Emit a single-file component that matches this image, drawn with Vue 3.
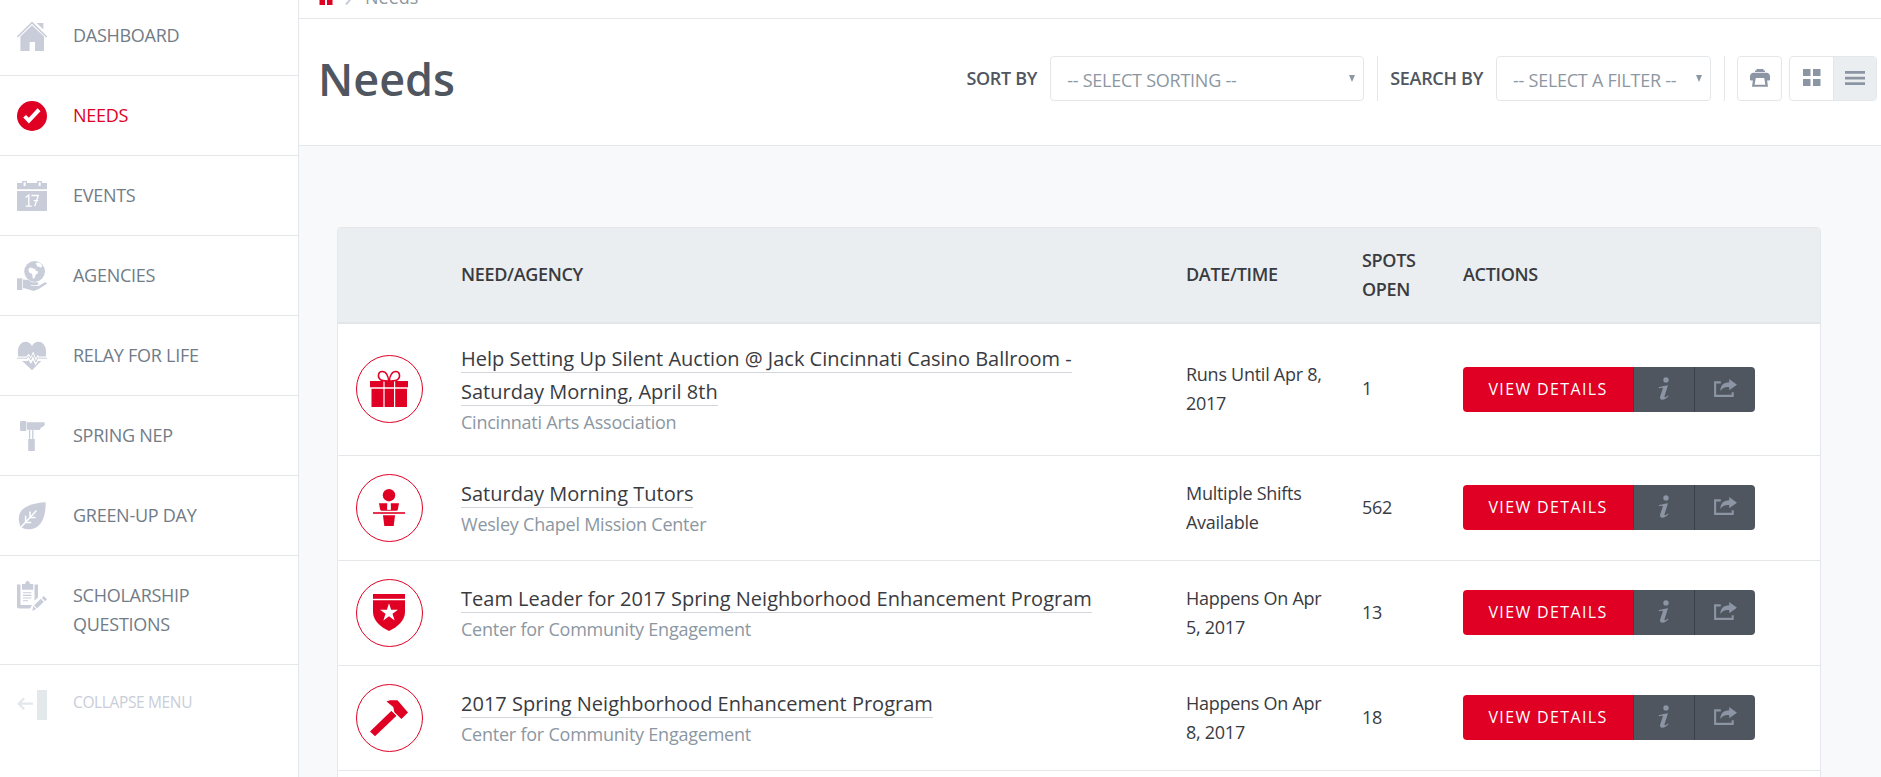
<script setup>
const menu = [
  { label: 'DASHBOARD', icon: 'home' },
  { label: 'NEEDS', icon: 'check', active: true },
  { label: 'EVENTS', icon: 'calendar' },
  { label: 'AGENCIES', icon: 'globe' },
  { label: 'RELAY FOR LIFE', icon: 'heart' },
  { label: 'SPRING NEP', icon: 'mallet' },
  { label: 'GREEN-UP DAY', icon: 'leaf' },
  { label: 'SCHOLARSHIP\nQUESTIONS', icon: 'clipboard' },
]

const needs = [
  {
    icon: 'gift',
    title: 'Help Setting Up Silent Auction @ Jack Cincinnati Casino Ballroom -\nSaturday Morning, April 8th',
    agency: 'Cincinnati Arts Association',
    date: 'Runs Until Apr 8,\n2017',
    spots: '1',
  },
  {
    icon: 'tutor',
    title: 'Saturday Morning Tutors',
    agency: 'Wesley Chapel Mission Center',
    date: 'Multiple Shifts\nAvailable',
    spots: '562',
  },
  {
    icon: 'badge',
    title: 'Team Leader for 2017 Spring Neighborhood Enhancement Program',
    agency: 'Center for Community Engagement',
    date: 'Happens On Apr\n5, 2017',
    spots: '13',
  },
  {
    icon: 'hammer',
    title: '2017 Spring Neighborhood Enhancement Program',
    agency: 'Center for Community Engagement',
    date: 'Happens On Apr\n8, 2017',
    spots: '18',
  },
]
</script>

<template>
  <div class="app">
    <nav class="sidebar">
      <a v-for="m in menu" :key="m.label" class="item" :class="{ active: m.active }">
        <svg class="item-icon" viewBox="0 0 30 30">
          <g v-if="m.icon === 'home'">
            <path d="M15 4.2 27 15.6V30H18V21H12.6V30H3.4V15.6Z" />
            <path d="M.4 16 15 1.6 29.6 16" fill="none" stroke="currentColor" stroke-width="1.5" />
            <path d="M20 2h6.4v6.6L20 2.6Z" />
          </g>
          <g v-else-if="m.icon === 'check'">
            <circle cx="15" cy="15" r="15" />
            <path d="M6.2 16.6 9 13.9l2.8 2.8L20.6 7.3l2.9 2.9L11.9 22.4Z" fill="#fff" />
          </g>
          <g v-else-if="m.icon === 'calendar'">
            <path d="M0 2h5V0h5v2h10V0h5v2h5v6.2H0ZM6.6 1.200V5h2V1.200ZM21.600 1.200V5h2V1.200Z" fill-rule="evenodd" />
            <path d="M0 10h30v20H0Z" />
            <g fill="none" stroke="#fff" stroke-width="1.3">
              <path d="M8.600 16.400 11.800 14v11M8.600 25.100h6.200" />
              <path d="M14.400 14.500h6.900l-3.600 10.800M16.600 19.600h4.600" />
            </g>
          </g>
          <g v-else-if="m.icon === 'globe'">
            <circle cx="17.600" cy="10.500" r="10.400" />
            <path d="M11.300 8.200 13 6.600l2.500.3 1.400 1 1.400-.4.200 2.100 2.700 1.200-.5 1.800-2 1.100-1 3-.8 1-1.300-.8-.4-4-3-1.300Z" fill="#fff" />
            <path d="M18.600 2.200 21.400 1.200l3 2.100.8 2.600-2.200.5-1.200-1-1.500.4-.5-1.600Z" fill="#fff" />
            <path d="M0 17.300h5.300V29H0Z" />
            <path d="M6 18.400 11.400 19l3.600 2.200h5.200c1.800.4 1.600 2.800-.4 3h-6v.8h7.600l2-1 3.600-2.300c1.600-.8 3 .2 3 1L21.600 28l-4.800 2-9.400-2.800L6 27.200Z" />
          </g>
          <g v-else-if="m.icon === 'heart'">
            <path d="M1.300 15.600C-.4 7 3 .8 8.500 .8c3 0 5.300 1.700 6.500 4.400C16.200 2.500 18.500 .8 21.500 .8 27 .8 30.400 7 28.700 15.600h-7l-1-1.800-1.700 4.600-2.700-7.200-2.600 5.600-2-3.800-2.200 2.600Z" />
            <path d="M0 17.200h10l1.700-2 2 3.800 2.400-5.200 2.700 7.200 2-4.600.8.800H30" fill="none" stroke="#fff" stroke-width="2.600" />
            <path d="M0 17.200h10l1.700-2 2 3.800 2.400-5.200 2.700 7.200 2-4.600.8.800H30" fill="none" stroke="currentColor" stroke-width="1" />
            <path d="M5.200 20h5.300l1-1 2.400 4 2.200-4 2.400 5.600 2.600-4.600h3.200L15 29.200Z" />
          </g>
          <g v-else-if="m.icon === 'mallet'">
            <rect x="3" y="0" width="6.400" height="10" rx="1.200" />
            <path d="M10 1.200h17.600V4.600L24 6.800 22.600 9 10 8.800Z" />
            <path d="M12.600 9v9M15.800 9v9" stroke="currentColor" stroke-width="1.300" />
            <path d="M11.200 18h6.600v12h-6.600Z" />
          </g>
          <g v-else-if="m.icon === 'leaf'">
            <path d="M28.600 1.200C29 13 25.600 29.600 9.600 28.200 6.800 27.800 5 27 3.700 26-1.500 14 2.800 2.500 28.600 1.200Z" />
            <path d="M2 28.200 19.500 9.600M13 16.400V10.600M8.600 21.200v-6.400M12.800 16.600h5.800M8.200 21.500h6" fill="none" stroke="#fff" stroke-width="1.500" />
          </g>
          <g v-else>
            <path d="M3.500 3.500V24H15L13 27.500H2Q0 27.500 0 25.500V3.500Z" />
            <path d="M17.500 3.500H21V16.500L17.500 19.500Z" />
            <path d="M5 3h3.200q.4-3 2.400-3t2.400 3h3.200v5.800H5Z" />
            <path d="M6 11.800h8.400M6 14.400h8.400M6 17h8.400M6 19.700h5" stroke="currentColor" stroke-width="1.100" />
            <path d="M17.200 24.200 23.800 17.800 26.800 20.800 20 27.400ZM24.800 17l1.400-1.500q.8-.5 1.600.4l1.800 1.800q.5.800-.2 1.500L27.800 20.100ZM16.400 25l2.800 3-4 2Z" />
          </g>
        </svg>
        <span>{{ m.label }}</span>
      </a>
      <a class="item collapse">
        <svg class="item-icon" viewBox="0 0 30 30">
          <path d="M20 0h10v30H20Z" />
          <path d="M16 13.700H1.800M7.200 8.200 1.700 13.700l5.500 5.500" fill="none" stroke="currentColor" stroke-width="2.200" />
        </svg>
        <span>COLLAPSE MENU</span>
      </a>
    </nav>

    <main class="main">
      <div class="crumbs">
        <svg class="crumb-home" viewBox="0 0 18 15">
          <path d="M9 0 17 7.500V8H15.500V15H10V9H8v6H2.500V8H1V7.500Z" />
        </svg>
        <svg class="crumb-sep" viewBox="0 0 8 14"><path d="m1 .5 5.500 6.500L1 13.500" /></svg>
        <span>Needs</span>
      </div>

      <header class="head">
        <h1>Needs</h1>
        <div class="tools">
          <span class="label">SORT BY</span>
          <div class="select sort"><span>-- SELECT SORTING --</span><i></i></div>
          <span class="divider"></span>
          <span class="label">SEARCH BY</span>
          <div class="select filter"><span>-- SELECT A FILTER --</span><i></i></div>
          <span class="divider"></span>
          <button class="tool">
            <svg width="20" height="18" viewBox="0 0 20 18">
              <path d="M6.500 0h7v1.500H15V3H5V1.500h1.500Z" />
              <path d="M3 3.800h14q3 .8 3 4V10.500q0 1-1 1H17.100L18 17.700H2L2.900 11.500H1q-1 0-1-1V7.800Q0 4.600 3 3.800ZM5.800 9 4.600 15.800H15.400L14.200 9Z" fill-rule="evenodd" />
            </svg>
          </button>
          <div class="views">
            <button class="view">
              <svg class="tiles" width="18" height="17" viewBox="0 0 18 17">
                <path d="M0 0h7.500v7H0ZM10 0h7.500v7H10ZM0 10h7.500v7H0ZM10 10h7.500v7H10Z" />
              </svg>
            </button>
            <button class="view on">
              <svg width="20" height="14" viewBox="0 0 20 14">
                <path d="M0 0h20v2.700H0ZM0 5.700h20v2.700H0ZM0 11.300h20V14H0Z" />
              </svg>
            </button>
          </div>
        </div>
      </header>

      <section class="content">
        <div class="card">
          <div class="row thead">
            <span></span>
            <span>NEED/AGENCY</span>
            <span>DATE/TIME</span>
            <span class="two-line">SPOTS<br />OPEN</span>
            <span>ACTIONS</span>
          </div>
          <div v-for="n in needs" :key="n.title" class="row need">
            <div class="round">
              <svg width="68" height="68" viewBox="0 0 68 68">
                <ellipse cx="33.500" cy="34" rx="33" ry="33.500" fill="none" stroke="currentColor" />
                <g v-if="n.icon === 'gift'">
                  <path d="M14 26h13.400v6.200H14ZM28.600 26H38v6.200h-9.400ZM39.200 26H52v6.200H39.200Z" />
                  <path d="M15.500 33.700h11.900V52H15.500ZM28.600 33.700H38V52h-9.400ZM39.200 33.700H51V52H39.200Z" />
                  <path d="M32.500 26C32.500 21 30 16.600 26.200 16.600c-4.200 0-5 5.400-1.800 8 1.800 1.400 4.600 1.300 8.100 1.400ZM33.500 26c0-5 2.500-9.400 6.300-9.400 4.200 0 5 5.400 1.800 8-1.800 1.400-4.600 1.300-8.100 1.400Z" fill="none" stroke="currentColor" stroke-width="1.500" />
                </g>
                <g v-else-if="n.icon === 'tutor'">
                  <circle cx="33" cy="21.200" r="6.200" />
                  <path d="M23 29.200h8.200v6.500h3.600v-6.500H43l-1.200 6.500q-.4 1-1.500 1H25.700q-1.100 0-1.500-1Z" />
                  <path d="M32 30h2l.8 5.500h-3.600Z" fill="#fff" />
                  <path d="M17 38h32v2H17Z" opacity=".8" />
                  <path d="M27 41.300h12L37.700 52h-9.400Z" />
                </g>
                <g v-else-if="n.icon === 'badge'">
                  <path d="M17 15h32v4.800H17Z" />
                  <path d="M17 21.200h32V33c0 8-7 15-16 19-9-4-16-11-16-19Z" />
                  <path d="m33 24.200 2.100 6.500H42l-5.500 4.100 2.100 6.600L33 37.300l-5.600 4.100 2.100-6.600L24 30.700h6.900Z" fill="#fff" />
                </g>
                <g v-else>
                  <path d="M30.500 17.500 34 16.200h7.500L52 28.500l-6.600 6.400-7-6.600L37.300 23Z" />
                  <path d="M14 47.500 35.500 26.700l5 5L19 52.300Z" />
                  <path d="m34.600 25.800 7.600 7" stroke="#fff" stroke-width=".8" />
                </g>
              </svg>
            </div>
            <div>
              <div class="title"><a>{{ n.title }}</a></div>
              <div class="agency">{{ n.agency }}</div>
            </div>
            <div class="date">{{ n.date }}</div>
            <div class="spots">{{ n.spots }}</div>
            <div class="actions">
              <button class="details">VIEW DETAILS</button>
              <button class="dark">
                <svg width="12" height="23" viewBox="0 0 12 23">
                  <circle cx="8" cy="2.900" r="2.700" />
                  <path d="M.8 10.200C3 9.800 6 9 10 8.300L6.600 19c-.3 1.200 0 1.500.8 1.200.8-.3 1.700-.9 2.700-1.800l.6.600c-2 2.300-4.400 3.700-6.300 3.700-2 0-2.800-1.400-2.200-3.400L4.700 12c.3-1-.2-1.300-1-1.200l-3 .5Z" />
                </svg>
              </button>
              <button class="dark">
                <svg width="23" height="18" viewBox="0 0 23 18">
                  <path d="M6.800 3.400H1.100v13.500h17.600v-3.700" fill="none" stroke="currentColor" stroke-width="2.100" />
                  <path d="M15.200 0 23 5.700l-7.800 5.600V8c-4.200-.3-6.900.8-8.900 4C6.500 6.500 9.600 3.400 15.200 3.300Z" />
                </svg>
              </button>
            </div>
          </div>
        </div>
      </section>
    </main>
  </div>
</template>

<style>
body {
  overflow: hidden;
}
</style>

<style scoped>
* {
  box-sizing: border-box;
}
.app {
  display: flex;
  width: 100%;
  height: 777px;
  overflow: hidden;
  background: #fff;
  font-family: 'Open Sans', 'Noto Sans', sans-serif;
  font-size: 18px;
  line-height: 29px;
  color: #3a3b3f;
}
svg {
  display: block;
  fill: currentColor;
}
button {
  margin: 0;
  padding: 0;
  font-family: inherit;
}
.sidebar {
  flex: none;
  width: 299px;
  margin-top: -4px;
  border-right: 1px solid #e5e7ea;
}
.item {
  display: flex;
  padding: 25px 0 25px 17px;
  border-bottom: 1px solid #e5e7ea;
  color: #717c87;
  letter-spacing: -0.27px;
  white-space: pre-line;
}
.item-icon {
  flex: none;
  width: 30px;
  height: 30px;
  margin-right: 26px;
  margin-bottom: -1px;
  color: #c9cdd9;
}
.active,
.active .item-icon {
  color: #e00024;
}
.collapse {
  border-bottom: 0;
  font-size: 15.5px;
  letter-spacing: -0.36px;
  line-height: 25px;
  color: #c9cdd9;
}
.collapse .item-icon {
  color: #e3e8ea;
}
.main {
  flex: 1;
  min-width: 0;
  background: #f8f9fb;
}
.crumbs {
  display: flex;
  height: 19px;
  padding-left: 18px;
  background: #fff;
  border-bottom: 1px solid #e5e7ea;
  color: #8c97a2;
}
.crumb-home {
  width: 18px;
  height: 15px;
  margin-top: -10px;
  color: #e00024;
}
.crumb-sep {
  width: 8px;
  height: 14px;
  margin: -9px 12px 0 10px;
  fill: none;
  stroke: #c9cdd9;
  stroke-width: 2;
}
.crumbs span {
  margin-top: -17px;
}
.head {
  display: flex;
  justify-content: space-between;
  height: 127px;
  padding: 37px 4px 0 19px;
  background: #fff;
  border-bottom: 1px solid #e5e7ea;
}
h1 {
  margin: -8px 0 0;
  font-size: 45px;
  line-height: 62px;
  font-weight: 600;
  color: #4f5660;
}
.tools {
  display: flex;
  height: 45px;
}
.label {
  margin-right: 13px;
  line-height: 45px;
  font-weight: 600;
  letter-spacing: -0.3px;
  color: #4f5660;
}
.select {
  display: flex;
  justify-content: space-between;
  padding-left: 16px;
  border: 1px solid #e3e7ea;
  border-radius: 4px;
  color: #8c97a2;
  letter-spacing: -0.25px;
  line-height: 47px;
}
.sort {
  width: 314px;
}
.filter {
  width: 215px;
}
.select i {
  width: 0;
  height: 0;
  margin: 18px 8px 0 0;
  border: 3.5px solid transparent;
  border-top: 7px solid #8c97a2;
  border-bottom: 0;
}
.divider {
  width: 1px;
  margin: 0 12px 0 13px;
  background: #e3e7ea;
}
.tool,
.views {
  border: 1px solid #e3e7ea;
  border-radius: 4px;
  background: #fff;
  color: #8b95a3;
}
.tool {
  width: 45px;
  margin-right: 7px;
}
.tool svg,
.view svg {
  margin: -2px auto 0;
}
.views {
  display: flex;
  width: 88px;
}
.view {
  width: 43px;
  border: 0;
  background: transparent;
  color: inherit;
}
.view .tiles {
  margin-left: 13px;
}
.on {
  background: #eaeef1;
  border-left: 1px solid #e3e7ea;
}
.content {
  padding: 81px 60px 0 38px;
}
.card {
  height: 700px;
  background: #fff;
  border: 1px solid #e5e7ea;
  border-radius: 4px 4px 0 0;
}
.row {
  display: grid;
  grid-template-columns: 105px 725px 176px 101px 1fr;
  align-items: center;
  min-height: 105px;
  padding: 18px 0 18px 18px;
  border-bottom: 1px solid #e5e7ea;
}
.thead {
  height: 96px;
  min-height: 0;
  padding-top: 0;
  padding-bottom: 0;
  border-bottom: 2px solid #e2e6ea;
  background: #eaeef1;
  font-weight: 600;
  letter-spacing: -0.33px;
  color: #3a3b3f;
}
.thead span {
  margin-bottom: 2px;
}
.thead .two-line {
  margin-bottom: 0;
}
.round {
  margin: -1px 0 -1px;
  color: #e00024;
}
.title {
  font-size: 20px;
  line-height: 33px;
  letter-spacing: 0.01px;
  white-space: pre-line;
}
.title a {
  border-bottom: 1px solid #d3d6da;
}
.agency {
  letter-spacing: -0.23px;
  color: #8c97a2;
}
.date {
  white-space: pre-line;
  letter-spacing: -0.27px;
}
.spots {
  margin-bottom: 2px;
  letter-spacing: -0.25px;
}
.thead + .need .round {
  margin-bottom: 0;
}
.thead + .need .date {
  margin-bottom: 1px;
}
.actions {
  display: flex;
  width: 292px;
  height: 45px;
  border-radius: 4px;
  overflow: hidden;
}
.need + .need .actions {
  margin-bottom: 1px;
}
.actions button {
  border: 0;
}
.actions .details {
  width: 170px;
  padding-bottom: 2px;
  background: #e00024;
  color: #fff;
  font-size: 16px;
  letter-spacing: 1.35px;
}
.actions .dark {
  width: 61px;
  border-left: 1px solid #3a3e46;
  background: #4f5660;
  color: #8b95a3;
}
.dark svg {
  margin: -3px auto 0;
}
</style>
